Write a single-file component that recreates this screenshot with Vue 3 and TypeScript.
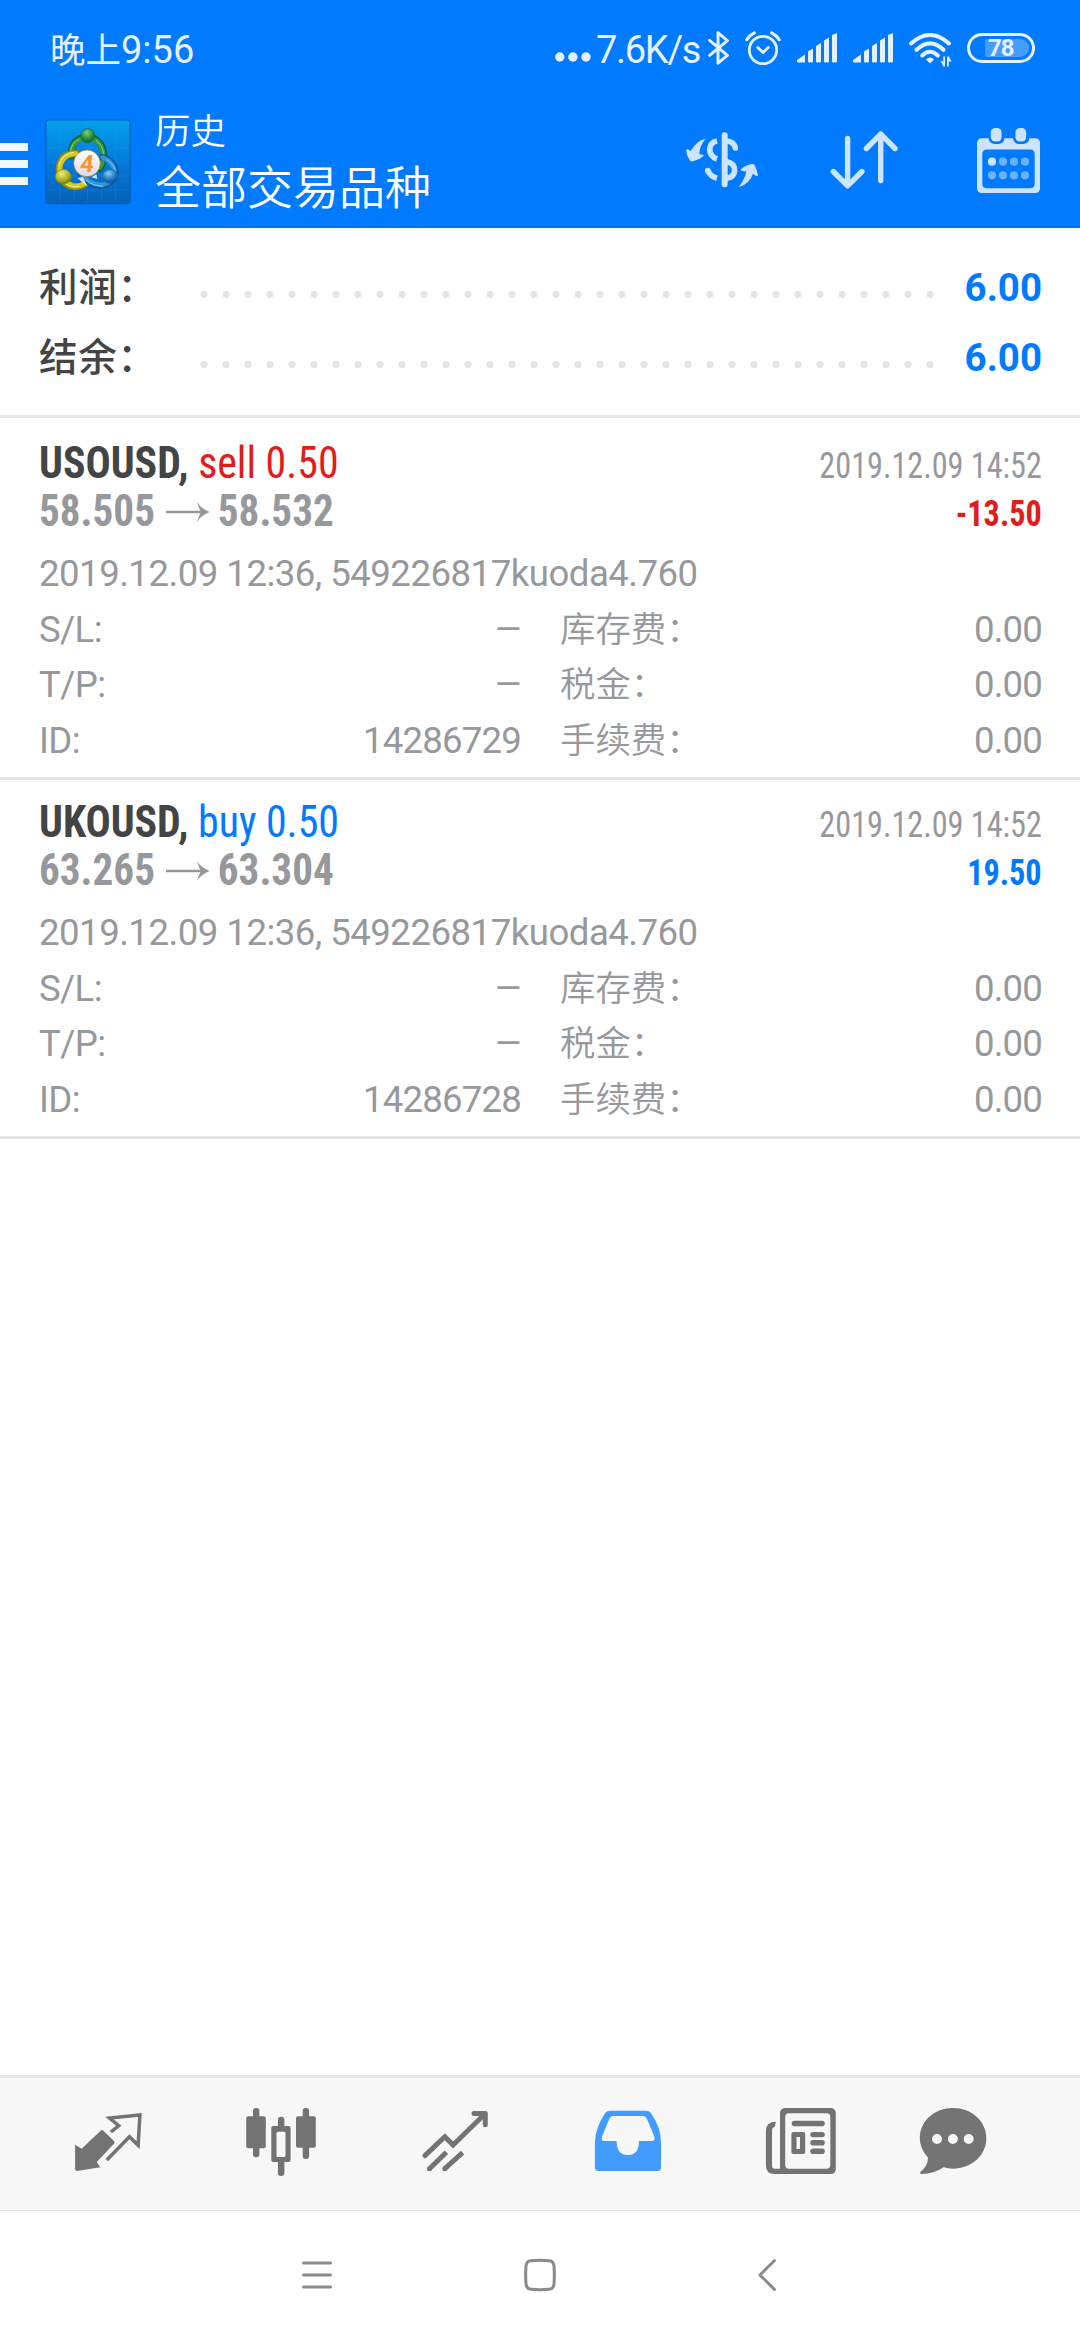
<script setup lang="ts">
interface Field {
  label: string
  value: string
}

interface Deal {
  symbol: string
  side: 'sell' | 'buy'
  volume: string
  open: string
  close: string
  closedAt: string
  profit: string
  comment: string
  left: Field[]
  right: Field[]
}

const summary: Field[] = [
  { label: '利润：', value: '6.00' },
  { label: '结余：', value: '6.00' },
]

const fees: Field[] = [
  { label: '库存费：', value: '0.00' },
  { label: '税金：', value: '0.00' },
  { label: '手续费：', value: '0.00' },
]

const deals: Deal[] = [
  {
    symbol: 'USOUSD',
    side: 'sell',
    volume: '0.50',
    open: '58.505',
    close: '58.532',
    closedAt: '2019.12.09 14:52',
    profit: '-13.50',
    comment: '2019.12.09 12:36, 549226817kuoda4.760',
    left: [
      { label: 'S/L:', value: '–' },
      { label: 'T/P:', value: '–' },
      { label: 'ID:', value: '14286729' },
    ],
    right: fees,
  },
  {
    symbol: 'UKOUSD',
    side: 'buy',
    volume: '0.50',
    open: '63.265',
    close: '63.304',
    closedAt: '2019.12.09 14:52',
    profit: '19.50',
    comment: '2019.12.09 12:36, 549226817kuoda4.760',
    left: [
      { label: 'S/L:', value: '–' },
      { label: 'T/P:', value: '–' },
      { label: 'ID:', value: '14286728' },
    ],
    right: fees,
  },
]
</script>

<template>
  <div class="screen">
    <header class="top">
      <div class="status">
        <div class="clock"><span class="cjk">晚上</span>9:56</div>
        <div class="indicators">
          <svg class="dots" width="36" height="10" viewBox="0 0 36 10">
            <circle cx="4.8" cy="5" r="4.7" /><circle cx="17.9" cy="5" r="4.7" /><circle cx="31" cy="5" r="4.7" />
          </svg>
          <span class="speed">7.6K/s</span>
          <svg class="bluetooth line" width="22" height="36" viewBox="0 0 22 36">
            <path d="M1.6 10.3 19.4 25.4 10 33.2V2.6l9.4 8L1.6 25.4" stroke-width="3" />
          </svg>
          <svg class="alarm line" width="36" height="36" viewBox="0 0 36 36">
            <circle cx="18" cy="20" r="13.7" stroke-width="2.8" />
            <path d="M12.8 17.5 18 22.5 23.2 17.5" stroke-width="2.8" />
            <path d="M1.9 9.6Q4.8 5.2 9.3 2.9M34.1 9.6Q31.2 5.2 26.7 2.9" stroke-width="3.2" />
          </svg>
          <svg v-for="n in 2" :key="n" class="signal" width="40" height="30" viewBox="0 0 40 30">
            <path d="M0 28.500V27L8 21.500V29.500H1Q0 29.500 0 28.500ZM11 18.500 16 15.600V28.500Q16 29.500 15 29.500H12Q11 29.500 11 28.500ZM19 13 24 10V28.500Q24 29.500 23 29.500H20Q19 29.500 19 28.500ZM27 7.500 32 4.500V28.500Q32 29.500 31 29.500H28Q27 29.500 27 28.500ZM35 2 40 0V28.500Q40 29.500 39 29.500H36Q35 29.500 35 28.500Z" />
          </svg>
          <svg class="wifi" width="44" height="34" viewBox="0 0 44 34">
            <g class="line">
              <path d="M2 10.500Q21-6.500 40 10.500" stroke-width="4" />
              <path d="M7.500 16.800Q21 4 34.500 16.800" stroke-width="4" />
              <path d="M13.200 22.500Q21 15 28.800 22.500" stroke-width="4" />
            </g>
            <path d="M17 26.500Q21 22.500 25 26.500L21 30.500Z" />
            <path d="M34.300 23.500V33.500H36V23.500ZM34.300 33.300 31.500 28.200H34.300ZM38 23.500V33.500H39.700V23.500ZM39.700 23.500 42.700 28.500H39.700Z" />
          </svg>
          <div class="battery"><span>78</span></div>
        </div>
      </div>

      <div class="toolbar">
        <div class="burger"><i></i><i></i><i></i></div>
        <svg class="logo" width="86" height="87" viewBox="46 42 258 261">
          <defs>
            <linearGradient id="lg-bg" x1="0" y1="0" x2="0" y2="1">
              <stop offset="0" stop-color="#02a0ee" /><stop offset=".55" stop-color="#0478d8" /><stop offset="1" stop-color="#0560b8" />
            </linearGradient>
            <radialGradient id="lg-green" cx=".45" cy=".3" r=".7"><stop offset="0" stop-color="#7fcb7c" /><stop offset=".6" stop-color="#279043" /><stop offset="1" stop-color="#116026" /></radialGradient>
            <radialGradient id="lg-yellow" cx=".4" cy=".3" r=".7"><stop offset="0" stop-color="#edea82" /><stop offset=".6" stop-color="#b5b426" /><stop offset="1" stop-color="#77790d" /></radialGradient>
            <radialGradient id="lg-blue" cx=".4" cy=".3" r=".7"><stop offset="0" stop-color="#8ccaf2" /><stop offset=".6" stop-color="#217dc4" /><stop offset="1" stop-color="#0b4d91" /></radialGradient>
            <linearGradient id="lg-disc" x1="0" y1="0" x2="0" y2="1"><stop offset="0" stop-color="#fff" /><stop offset="1" stop-color="#dcdce4" /></linearGradient>
          </defs>
          <rect x="48.500" y="44.500" width="253" height="251" rx="9" fill="url(#lg-bg)" stroke="#0561b8" stroke-width="4" />
          <path d="M91 48V292M133 48V292M174 48V292M216 48V292M258 48V292M52 88H298M52 130H298M52 171H298M52 213H298M52 254H298" stroke="#35a8f0" stroke-opacity=".22" stroke-width="2.500" fill="none" />
          <g fill="none" stroke-linecap="round">
            <path d="M125 153Q122 110 157 98H191Q220 112 223 150Q222 178 210 192" stroke="#0f6127" stroke-width="20" />
            <path d="M125 151Q123 112 158 101H190Q218 114 221 150Q220 176 210 188" stroke="#319a45" stroke-width="15" />
            <path d="M122 140Q126 112 148 104M200 106Q219 120 222 148" stroke="#8fd38e" stroke-width="3" />
            <path d="M140 145Q90 145 88 193Q92 236 130 245Q150 248 169 235" stroke="#8c8a10" stroke-width="20" />
            <path d="M138 146Q93 147 90 193Q95 233 130 242Q150 245 166 235" stroke="#d4c823" stroke-width="15" />
            <path d="M132 142Q97 145 87 182M110 237Q125 248 148 244" stroke="#f4ef8a" stroke-width="3" />
            <path d="M218 156Q258 170 259 206Q250 237 217 244Q178 243 154 208" stroke="#0b5ba6" stroke-width="19" />
            <path d="M219 158Q254 172 255 205Q248 232 217 240Q181 239 157 208" stroke="#2f94d8" stroke-width="14" />
            <path d="M232 164Q256 180 258 202M170 225Q190 244 218 243" stroke="#8bccf3" stroke-width="3" />
          </g>
          <circle cx="174" cy="92" r="21" fill="url(#lg-green)" stroke="#166c2d" stroke-width="2" />
          <ellipse cx="101" cy="215" rx="24" ry="22" fill="url(#lg-yellow)" stroke="#84840f" stroke-width="2" />
          <ellipse cx="242" cy="214" rx="24" ry="21" fill="url(#lg-blue)" stroke="#1163a9" stroke-width="2" />
          <path d="M143 219 160 216 172 243ZM185 217 203 222 200 208Z" fill="#fff" opacity=".8" />
          <circle cx="172" cy="175" r="40" fill="url(#lg-disc)" stroke="#8d6d34" stroke-width="2" />
          <text transform="translate(170 200) skewX(-5)" text-anchor="middle" class="logo-digit">4</text>
        </svg>
        <div class="titles">
          <div class="title">历史</div>
          <div class="subtitle">全部交易品种</div>
        </div>
        <svg class="tool currency" width="74" height="60" viewBox="0 0 222 180">
          <g class="line">
            <path d="M119 13V160" stroke-width="18" />
            <path d="M126 30Q147 32 151 51" stroke-width="17" />
            <path d="M126 92Q149 96 149 119Q147 138 126 142" stroke-width="17" />
            <path d="M96 30Q74 35 74 56Q76 77 96 84M69 118Q74 136 96 142" stroke-width="17" stroke-linecap="butt" />
            <circle cx="68" cy="119" r="8.400" stroke="none" fill="#cce4ff" />
          </g>
          <path d="M62 23Q37 26 17 60Q9 52 3 56Q5 75 15 89Q18 92 24 91Q43 87 56 75Q57 71 43 70Q43 44 62 23Z" />
          <path d="M161 169Q182 140 184 121Q173 122 166 117Q180 102 201 99Q207 99 209 103Q217 119 219 133Q216 138 204 128Q194 158 161 169Z" />
        </svg>
        <svg class="tool sort line" width="68" height="60" viewBox="0 0 68 60">
          <path d="M17.600 7.500V54M3.300 40.500 17.600 54.800 31.900 40.500M50.700 49.500V3M36.400 17.500 50.700 3.200 65 17.500" stroke-width="5.400" />
        </svg>
        <svg class="tool calendar" width="64" height="66" viewBox="0 0 64 66">
          <path fill-rule="evenodd" d="M5 10.300H11.500Q12.500 16 18 16H21Q27 16 27.500 10.300H36Q37 16 42 16H46Q51.500 16 52.300 10.300H58Q63 10.300 63 15.300V60.300Q63 65 58 65H5Q0 65 0 60.300V15.300Q0 10.300 5 10.300ZM10 21.500Q5.300 21.500 5.300 26V55.500Q5.300 60.200 10 60.200H53Q57.700 60.200 57.700 55.500V26Q57.700 21.500 53 21.500Z" />
          <rect x="13.800" y="0" width="10.800" height="13.500" rx="4.500" /><rect x="38.400" y="0" width="10.800" height="13.500" rx="4.500" />
          <circle cx="15" cy="33.700" r="4.100" />
          <g opacity=".52">
            <circle cx="26" cy="33.700" r="4.100" /><circle cx="37" cy="33.700" r="4.100" /><circle cx="48" cy="33.700" r="4.100" />
            <circle cx="15" cy="47.300" r="4.100" /><circle cx="26" cy="47.300" r="4.100" /><circle cx="37" cy="47.300" r="4.100" /><circle cx="48" cy="47.300" r="4.100" />
          </g>
        </svg>
      </div>
    </header>

    <section class="summary">
      <div v-for="row in summary" :key="row.label" class="summary-row">
        <span class="summary-label">{{ row.label }}</span>
        <span class="leader"></span>
        <span class="summary-value">{{ row.value }}</span>
      </div>
    </section>

    <main class="deals">
      <article v-for="deal in deals" :key="deal.symbol" class="deal">
        <div class="head-row">
          <div class="cond instrument"><b>{{ deal.symbol }},</b> <span class="order" :class="deal.side">{{ deal.side }} {{ deal.volume }}</span></div>
          <div class="cond-date">{{ deal.closedAt }}</div>
        </div>
        <div class="head-row">
          <div class="prices">
            <span class="cond price">{{ deal.open }}</span>
            <svg class="arrow" width="47.6" height="20" viewBox="0 0 44 20" preserveAspectRatio="none">
              <path d="M0 8.700H34.500L31 0Q36 7 44 10Q36 13 31 20L34.500 11.300H0Z" />
            </svg>
            <span class="cond price">{{ deal.close }}</span>
          </div>
          <div class="profit" :class="deal.side">{{ deal.profit }}</div>
        </div>
        <div class="details">
          <div class="comment">{{ deal.comment }}</div>
          <div class="columns">
            <div class="col">
              <div v-for="f in deal.left" :key="f.label" class="field">
                <span class="key">{{ f.label }}</span><span :class="{ empty: f.value === '–' }">{{ f.value }}</span>
              </div>
            </div>
            <div class="col">
              <div v-for="f in deal.right" :key="f.label" class="field">
                <span class="cjk">{{ f.label }}</span><span>{{ f.value }}</span>
              </div>
            </div>
          </div>
        </div>
      </article>
    </main>

    <nav class="tabs">
      <div class="tab">
        <svg width="72" height="72" viewBox="0 0 72 72">
          <path d="M38.900 24 46.800 17.700 37.500 10 67.900 7 66.100 37.300 57.500 28.700 34.800 52" fill="none" stroke="#737373" stroke-width="3.500" />
          <path d="M3.100 36.700 9.700 40.700 28.600 22.700Q30 21.500 31.400 22.700L42 33Q43.200 34.400 42 35.800L24.800 54 28.300 59.300 5 63Q3.100 63 3.100 61Z" />
        </svg>
      </div>
      <div class="tab">
        <svg width="72" height="72" viewBox="0 0 72 72">
          <rect x="8" y="0" width="6.400" height="49.300" rx="3" /><rect x="1.200" y="8.300" width="19.600" height="32" rx="2" />
          <rect x="57.700" y="0" width="6.400" height="51" rx="3" /><rect x="51" y="8.300" width="19.800" height="31.500" rx="2" />
          <path fill-rule="evenodd" d="M36.100 8.700Q39.400 8.700 39.400 12V18H43.600Q45.600 18 45.600 20V52Q45.600 54 43.600 54H39.400V65Q39.400 68 36.100 68T32.900 65V54H28.300Q26.300 54 26.300 52V20Q26.300 18 28.300 18H32.900V12Q32.900 8.700 36.100 8.700ZM33 23.700Q31.500 23.700 31.500 25.200V47.500Q31.500 49 33 49H39Q40.500 49 40.500 47.500V25.200Q40.500 23.700 39 23.700Z" />
        </svg>
      </div>
      <div class="tab">
        <svg width="72" height="72" viewBox="0 0 72 72" fill="none" stroke="#737373" stroke-width="5" stroke-linejoin="round">
          <path d="M5.900 47.600 25.900 28.700 34.100 37 65.800 6" stroke-linejoin="miter" stroke-linecap="round" fill="none" />
          <path d="M55 5.600H66.300V16.700" stroke-linecap="round" fill="none" />
          <path d="M10.500 60.700 27.400 44.300M25.800 60.700 43.600 44.600" fill="none" />
          <circle cx="10.500" cy="60.700" r="2.500" stroke="none" fill="#737373" /><circle cx="25.800" cy="60.700" r="2.500" stroke="none" fill="#737373" />
        </svg>
      </div>
      <div class="tab active">
        <svg width="72" height="72" viewBox="0 0 72 72">
          <path fill-rule="evenodd" d="M18 2.700H54Q57.500 2.700 59.500 6Q69 20 69 34V59.500Q69 63 65.500 63H6.500Q2.900 63 2.900 59.500V34Q3.500 20 12.500 6Q14.500 2.700 18 2.700ZM21.500 8Q18.500 8 17.200 11L10 28.500Q8.800 33 12 33H24.600Q24.600 47 35.800 47T47 33H59.500Q63.500 33 62.300 28.500L55 11Q53.700 8 51 8Z" />
        </svg>
      </div>
      <div class="tab">
        <svg width="72" height="72" viewBox="0 0 72 72">
          <path fill-rule="evenodd" d="M20.500 0H65.300Q70.800 0 70.800 5.500V60.500Q70.800 66 65.300 66H9.500Q.9 66 .9 57.500V23Q.9 13.700 10.900 13.700L9.700 18.900Q7 19.200 7 22.500V57.500Q7 60.700 10 60.700H15V5.500Q15 0 20.500 0ZM24 5.300Q20.200 5.300 20.200 9V57Q20.200 60.700 24 60.700H61.500Q65.300 60.700 65.300 57V9Q65.300 5.300 61.500 5.300Z" />
          <rect x="26.700" y="12.700" width="33.100" height="5.600" rx="2.800" />
          <path fill-rule="evenodd" d="M28.400 24H38.200Q40.200 24 40.200 26V44Q40.200 46 38.200 46H28.400Q26.400 46 26.400 44V26Q26.400 24 28.400 24ZM31.500 29V41H35V29Z" />
          <rect x="45.300" y="24" width="14.500" height="5.200" rx="2.600" /><rect x="45.300" y="32" width="14.500" height="5.600" rx="2.800" /><rect x="45.300" y="40.400" width="14.500" height="5.600" rx="2.800" />
        </svg>
      </div>
      <div class="tab tab-last">
        <svg width="72" height="72" viewBox="0 0 72 72">
          <path fill-rule="evenodd" d="M36 0C54.500 0 69.300 13 69.300 30.300S54.500 60.700 36 60.700Q31 60.700 26.600 59.300Q17 66 4.500 66Q2.300 65.500 3.700 63.800Q11 58 11 49.500Q2.800 41 2.800 30.300C2.800 13 17.500 0 36 0ZM20 26A5 5 0 1 0 20 36A5 5 0 1 0 20 26ZM35.900 26A5 5 0 1 0 35.900 36A5 5 0 1 0 35.900 26ZM51.700 26A5 5 0 1 0 51.700 36A5 5 0 1 0 51.700 26Z" />
        </svg>
      </div>
    </nav>

    <footer class="system">
      <svg width="32" height="34" viewBox="0 0 32 34"><path d="M2.500 5H29.500M2.500 17H29.500M2.500 29H29.500" /></svg>
      <svg width="34" height="34" viewBox="0 0 34 34"><path d="M8 2.700Q17 2 26 2.700Q30.500 3 31 8Q31.700 17 31 26Q30.500 31 26 31.300Q17 32 8 31.300Q3.500 31 3 26Q2.300 17 3 8Q3.500 3 8 2.700Z" /></svg>
      <svg width="20" height="34" viewBox="0 0 20 34"><path d="M17.500 2.500 3 17 17.500 31.500" /></svg>
    </footer>
  </div>
</template>

<style>
body {
  background: #fff;
}
</style>

<style scoped>
.screen {
  display: flex;
  flex-direction: column;
  width: 1080px;
  height: 2340px;
  overflow: hidden;
  background: #fff;
  color: #97989c;
  font-family: Roboto, "Noto Sans CJK SC", sans-serif;
}
svg {
  display: block;
  flex: none;
}
.line {
  fill: none;
  stroke-linecap: round;
  stroke-linejoin: round;
}

/* blue header */
.top {
  box-sizing: border-box;
  height: 228px;
  background: #007aff;
  border-bottom: 2px solid #0070ea;
}
.status {
  display: flex;
  justify-content: space-between;
  height: 100px;
  padding: 0 45px 0 50px;
  color: #e5f1ff;
  font-size: 38px;
  line-height: 100px;
  white-space: nowrap;
}
.clock .cjk {
  font-size: 35.500px;
  line-height: 1;
}
.indicators {
  display: flex;
  align-items: flex-start;
  fill: #e5f1ff;
}
.indicators .line {
  fill: none;
  stroke: #e5f1ff;
}
.dots {
  margin: 52px 5px 0 0;
}
.speed {
  width: 104px;
  letter-spacing: -1.3px;
}
.bluetooth {
  margin: 30px 0 0 8px;
}
.alarm {
  margin: 30px 0 0 15px;
}
.signal {
  margin: 33px 0 0 16px;
}
.wifi {
  margin: 33px 0 0 16px;
}
.battery {
  box-sizing: border-box;
  width: 68px;
  height: 30px;
  margin: 33px 0 0 14px;
  border: 3px solid #e5f1ff;
  border-radius: 15px;
  padding: 3px 3px 3px 15px;
}
.battery span {
  display: block;
  height: 18px;
  padding-left: 3px;
  border-radius: 2px 9px 9px 2px;
  background: #459eff;
  font-size: 24px;
  font-weight: 700;
  line-height: 19px;
  letter-spacing: -1px;
}

.toolbar {
  display: flex;
  height: 126px;
  fill: #cce4ff;
}
.toolbar > .line {
  stroke: #cce4ff;
  fill: none;
}
.tool .line {
  stroke: #cce4ff;
}
.burger {
  display: flex;
  flex-direction: column;
  gap: 9px;
  width: 28px;
  margin-top: 43px;
}
.burger i {
  height: 8px;
  background: #f0f7ff;
}
.logo {
  margin: 19px 0 0 17px;
}
.logo-digit {
  font: 700 72px Roboto, sans-serif;
  fill: #f9952b;
}
.titles {
  width: 300px;
  margin-left: 24px;
  padding-top: 8px;
  color: #fff;
  font-weight: 350;
  white-space: nowrap;
}
.title {
  height: 47px;
  font-size: 35.500px;
  line-height: 49px;
}
.subtitle {
  font-size: 46px;
  line-height: 66px;
}
.currency {
  margin: 31px 0 0 230px;
}
.sort {
  margin: 31px 0 0 71px;
}
.calendar {
  margin: 28px 0 0 79px;
}

/* totals */
.summary {
  padding: 25px 38px 22px 39px;
  border-bottom: 3px solid #e5e5e5;
}
.summary-row {
  display: flex;
  height: 70px;
  font-size: 38.500px;
  line-height: 70px;
}
.summary-label {
  width: 153.500px;
  color: #444;
  font-weight: 500;
  letter-spacing: 0.8px;
}
.leader {
  width: 748px;
  background: radial-gradient(circle at 11px 41.500px, #e5e5e5 3.200px, transparent 4px) 0 0 / 22px 70px repeat-x;
}
.summary-value {
  flex: 1;
  color: #007aff;
  font-weight: 700;
  text-align: right;
}

/* closed deals */
.deals {
  flex: 1;
  padding-top: 3px;
}
.deal {
  box-sizing: border-box;
  height: 359px;
  padding: 18px 38px 0 39px;
  border-bottom: 3px solid #e5e5e5;
}
.head-row {
  display: flex;
  justify-content: space-between;
  height: 48px;
  white-space: nowrap;
}
.cond,
.cond-date,
.profit {
  font-family: "Roboto Condensed", Roboto, sans-serif;
  font-stretch: 75%;
}
.cond {
  font-size: 44.500px;
  line-height: 48px;
}
.instrument {
  transform: scaleX(0.94);
  transform-origin: 0 50%;
}
.instrument b {
  color: #444;
}
.sell {
  color: #e21b1b;
}
.buy {
  color: #007aff;
}
.prices {
  display: flex;
  transform: scaleX(0.925);
  transform-origin: 0 50%;
}
.price {
  font-weight: 700;
}
.arrow {
  margin: 15px 8.800px 0 11.500px;
  fill: #97989c;
}
.cond-date,
.profit {
  font-size: 36.600px;
  line-height: 53px;
  transform: scaleX(0.88);
  transform-origin: 100% 50%;
}
.profit {
  font-weight: 700;
}
.profit.sell {
  color: #e21b1b;
}
.details {
  margin-top: 11px;
  font-size: 36.600px;
  line-height: 55.600px;
}
.comment {
  letter-spacing: -0.5px;
}
.columns {
  display: flex;
  gap: 39px;
  letter-spacing: -0.8px;
}
.col:first-child {
  width: 482px;
}
.col:last-child {
  flex: 1;
}
.field {
  display: flex;
  justify-content: space-between;
  height: 55.600px;
}
.key {
  letter-spacing: -0.6px;
}
.field .cjk {
  padding-top: 1px;
  font-size: 35.400px;
  font-weight: 350;
  letter-spacing: 0;
}
.empty {
  transform: translateX(1px) scaleX(1.22);
  transform-origin: 100% 50%;
}

/* bottom tabs */
.tabs {
  display: flex;
  align-items: center;
  box-sizing: border-box;
  height: 136px;
  padding-left: 21.700px;
  border-top: 3px solid #e5e5e5;
  border-bottom: 1px solid #e2e2e2;
  background: #f7f7f7;
  fill: #737373;
}
.tab {
  display: flex;
  justify-content: center;
  width: 173.200px;
}
.tab-last {
  width: 130px;
}
.active {
  fill: #429bff;
}

.system {
  display: flex;
  align-items: center;
  box-sizing: border-box;
  height: 129px;
  padding: 0 0 2px 301px;
  fill: none;
  stroke: #8a8a8a;
  stroke-width: 3;
  stroke-linecap: round;
  stroke-linejoin: round;
}
.system svg + svg {
  margin-left: 190px;
}
.system svg:last-child {
  margin-left: 200px;
}
</style>
